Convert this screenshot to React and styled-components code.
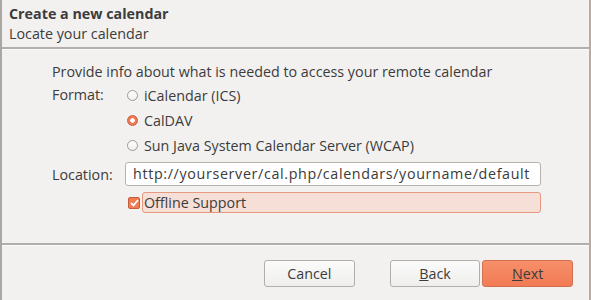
import React from 'react'
import styled, { createGlobalStyle } from 'styled-components'

const Global = createGlobalStyle`
  html, body { margin: 0; padding: 0; background: #f2f1f0; }
  body { font-family: "Open Sans", "Noto Sans", sans-serif; font-size: 14.3px; color: #3c3c3c; }
`

const Dialog = styled.div`
  width: 591px;
  height: 300px;
  box-sizing: border-box;
  background: #f2f1f0;
  border-left: 2px solid #a9a7a4;
  border-right: 2px solid #b7aca0;
  display: flex;
  flex-direction: column;
`

const Header = styled.div`
  height: 49px;
  box-sizing: border-box;
  padding: 4px 0 0 7px;
  border-bottom: 2px solid #b1aeab;
`

const Title = styled.div`
  font-weight: bold;
  line-height: 20px;
  color: #3c3c3c;
`

const Subtitle = styled.div`
  line-height: 20px;
`

const Body = styled.div`
  flex: 1;
  padding: 13px 0 0 50px;
  border-bottom: 2px solid #b1aeab;
  border-top: 1px solid #fbfbfa;
`

const Intro = styled.div`
  line-height: 18px;
  margin-bottom: 2px;
`

const Grid = styled.div`
  display: grid;
  grid-template-columns: 73px 416px;
  align-items: center;
`

const Label = styled.div`
  align-self: ${p => p.$top ? 'start' : 'center'};
  line-height: 18px;
  padding-top: ${p => p.$top ? '3px' : '0'};
`

const Options = styled.div`
  display: flex;
  flex-direction: column;
`

const Option = styled.label`
  display: flex;
  align-items: center;
  height: 24px;
  gap: 6px;
  &:not(:first-child) { margin-top: 1px; }
`

const Radio = styled.span`
  width: 11px;
  height: 11px;
  border-radius: 50%;
  box-sizing: border-box;
  border: 1px solid ${p => p.$on ? '#c9603c' : '#9e9a96'};
  background: ${p => p.$on ? 'radial-gradient(circle, #ffffff 0 2px, #ee7a55 2.5px)' : 'linear-gradient(#ffffff, #f0efee)'};
  margin-left: 2px;
`

const Input = styled.div`
  height: 24px;
  box-sizing: border-box;
  border: 1px solid #b5b2ae;
  border-radius: 3px;
  background: #ffffff;
  padding: 0 7px;
  line-height: 22px;
  color: #3a3a3a;
  margin: 5px 0 6px;
  white-space: nowrap;
  letter-spacing: 0.65px;
`

const CheckRow = styled.div`
  display: flex;
  align-items: center;
  gap: 2px;
`

const Check = styled.span`
  width: 12px;
  height: 12px;
  box-sizing: border-box;
  border: 1px solid #c65e3a;
  border-radius: 2px;
  background: #ef7c55;
  display: flex;
  align-items: center;
  justify-content: center;
  margin-left: 3px;
`

const Focus = styled.div`
  flex: 1;
  height: 21px;
  box-sizing: border-box;
  border: 1px solid #e69880;
  border-radius: 3px;
  background: #f6dfd6;
  line-height: 19px;
  padding-left: 1px;
`

const Footer = styled.div`
  height: 54px;
  display: flex;
  align-items: center;
  padding: 0 16px 0 262px;
  border-top: 1px solid #fbfbfa;
`

const Button = styled.button`
  width: 91px;
  height: 27px;
  box-sizing: border-box;
  font: inherit;
  border-radius: 3px;
  border: 1px solid ${p => p.$primary ? '#d1714f' : '#b2aeaa'};
  background: ${p => p.$primary ? 'linear-gradient(#f68f69, #f27b54)' : 'linear-gradient(#fbfbfb, #efeeed)'};
  color: #3c3c3c;
  margin-right: ${p => p.$gap || 0}px;
  padding: 0;
  u { text-decoration: underline; }
`

export default function App() {
  return (
    <>
      <Global />
      <Dialog>
        <Header>
          <Title>Create a new calendar</Title>
          <Subtitle>Locate your calendar</Subtitle>
        </Header>
        <Body>
          <Intro>Provide info about what is needed to access your remote calendar</Intro>
          <Grid>
            <Label $top>Format:</Label>
            <Options>
              <Option><Radio />iCalendar (ICS)</Option>
              <Option><Radio $on />CalDAV</Option>
              <Option><Radio />Sun Java System Calendar Server (WCAP)</Option>
            </Options>
            <Label>Location:</Label>
            <Input>http://yourserver/cal.php/calendars/yourname/default</Input>
            <div />
            <CheckRow>
              <Check>
                <svg width="9" height="8" viewBox="0 0 9 8">
                  <path d="M1 4 L3.5 6.5 L8 1" fill="none" stroke="#fff" strokeWidth="1.8" />
                </svg>
              </Check>
              <Focus>Offline Support</Focus>
            </CheckRow>
          </Grid>
        </Body>
        <Footer>
          <Button $gap={35}>Cancel</Button>
          <Button $gap={2}><u>B</u>ack</Button>
          <Button $primary><u>N</u>ext</Button>
        </Footer>
      </Dialog>
    </>
  )
}
